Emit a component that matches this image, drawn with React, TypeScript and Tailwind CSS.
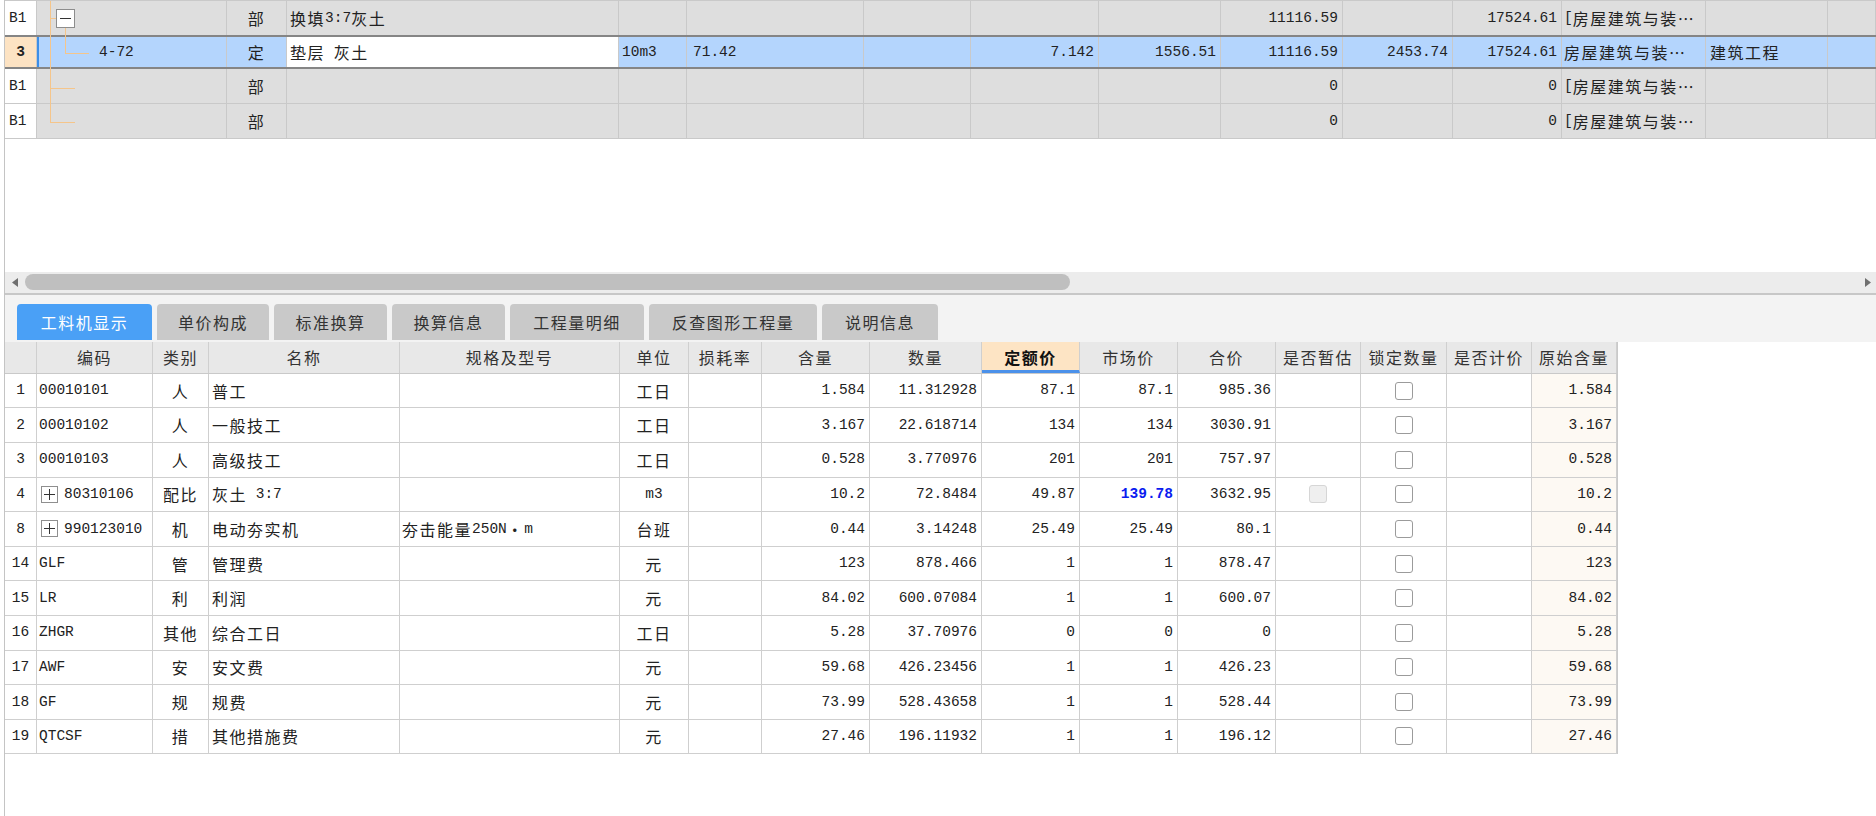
import React from 'react';

const CJK_RE = /([\u00b7\u2026\u22ef\u3000-\u9fff\uff00-\uffef]+)/;

// split mixed text so Chinese and latin get their own font
const Mix = ({ t }: { t: string }) => (
  <>
    {t
      .split(CJK_RE)
      .filter(Boolean)
      .map((p, i) =>
        CJK_RE.test(p) ? (
          <span key={i} className="font-['Noto_Sans_CJK_SC',sans-serif] text-[16px] tracking-[1.5px]">
            {p}
          </span>
        ) : (
          <span key={i} className="font-['Liberation_Mono',monospace] text-[14.5px] whitespace-pre">
            {p}
          </span>
        )
      )}
  </>
);

const TOP_W = [
  'w-[32px]', 'w-[190px]', 'w-[60px]', 'w-[332px]', 'w-[68px]', 'w-[177px]', 'w-[107px]',
  'w-[128px]', 'w-[122px]', 'w-[122px]', 'w-[110px]', 'w-[109px]', 'w-[144px]', 'w-[122px]', 'flex-1',
];
const TOP_AL = ['pl-[4px]', 'pl-[60px]', 'justify-center', 'pl-[3px]', 'pl-[3px]', 'pl-[6px]', 'justify-end pr-[4px]',
  'justify-end pr-[4px]', 'justify-end pr-[4px]', 'justify-end pr-[4px]', 'justify-end pr-[4px]', 'justify-end pr-[4px]',
  'pl-[2px]', 'pl-[4px]', 'pl-[4px]'];

const topRows = [
  ['B1', '', '部', '换填3:7灰土', '', '', '', '', '', '11116.59', '', '17524.61', '[房屋建筑与装⋯', '', ''],
  ['3', '4-72', '定', '垫层 灰土', '10m3', '71.42', '', '7.142', '1556.51', '11116.59', '2453.74', '17524.61', '房屋建筑与装⋯', '建筑工程', ''],
  ['B1', '', '部', '', '', '', '', '', '', '0', '', '0', '[房屋建筑与装⋯', '', ''],
  ['B1', '', '部', '', '', '', '', '', '', '0', '', '0', '[房屋建筑与装⋯', '', ''],
];

const BOT_W = [
  'w-[32px]', 'w-[116px]', 'w-[56px]', 'w-[191px]', 'w-[220px]', 'w-[69px]', 'w-[73px]', 'w-[108px]',
  'w-[112px]', 'w-[98px]', 'w-[98px]', 'w-[98px]', 'w-[85px]', 'w-[86px]', 'w-[85px]', 'w-[85px]',
];
const BOT_AL = ['justify-center', 'pl-[2px]', 'justify-center', 'pl-[3px]', 'pl-[2px]', 'justify-center', 'justify-center',
  'justify-end pr-[4px]', 'justify-end pr-[4px]', 'justify-end pr-[4px]', 'justify-end pr-[4px]', 'justify-end pr-[4px]',
  'justify-center', 'justify-center', 'justify-center', 'justify-end pr-[4px]'];

const headers = ['', '编码', '类别', '名称', '规格及型号', '单位', '损耗率', '含量', '数量', '定额价', '市场价', '合价', '是否暂估', '锁定数量', '是否计价', '原始含量'];

type Item = { no: string; code: string; plus?: boolean; kind: string; name: string; spec?: string; unit: string; qty: string; num: string; base: string; market: string; total: string; est?: boolean };

const items: Item[] = [
  { no: '1', code: '00010101', kind: '人', name: '普工', unit: '工日', qty: '1.584', num: '11.312928', base: '87.1', market: '87.1', total: '985.36' },
  { no: '2', code: '00010102', kind: '人', name: '一般技工', unit: '工日', qty: '3.167', num: '22.618714', base: '134', market: '134', total: '3030.91' },
  { no: '3', code: '00010103', kind: '人', name: '高级技工', unit: '工日', qty: '0.528', num: '3.770976', base: '201', market: '201', total: '757.97' },
  { no: '4', code: '80310106', plus: true, kind: '配比', name: '灰土 3:7', unit: 'm3', qty: '10.2', num: '72.8484', base: '49.87', market: '139.78', total: '3632.95', est: true },
  { no: '8', code: '990123010', plus: true, kind: '机', name: '电动夯实机', spec: '夯击能量250N·m', unit: '台班', qty: '0.44', num: '3.14248', base: '25.49', market: '25.49', total: '80.1' },
  { no: '14', code: 'GLF', kind: '管', name: '管理费', unit: '元', qty: '123', num: '878.466', base: '1', market: '1', total: '878.47' },
  { no: '15', code: 'LR', kind: '利', name: '利润', unit: '元', qty: '84.02', num: '600.07084', base: '1', market: '1', total: '600.07' },
  { no: '16', code: 'ZHGR', kind: '其他', name: '综合工日', unit: '工日', qty: '5.28', num: '37.70976', base: '0', market: '0', total: '0' },
  { no: '17', code: 'AWF', kind: '安', name: '安文费', unit: '元', qty: '59.68', num: '426.23456', base: '1', market: '1', total: '426.23' },
  { no: '18', code: 'GF', kind: '规', name: '规费', unit: '元', qty: '73.99', num: '528.43658', base: '1', market: '1', total: '528.44' },
  { no: '19', code: 'QTCSF', kind: '措', name: '其他措施费', unit: '元', qty: '27.46', num: '196.11932', base: '1', market: '1', total: '196.12' },
];

const tabs = ['工料机显示', '单价构成', '标准换算', '换算信息', '工程量明细', '反查图形工程量', '说明信息'];
const TAB_W = ['w-[135px]', 'w-[112px]', 'w-[113px]', 'w-[113px]', 'w-[134px]', 'w-[168px]', 'w-[116px]'];

const TreeLines = () => (
  <svg className="absolute left-[32px] top-0" width="190" height="140" viewBox="0 0 190 140">
    <g stroke="#f5c58a" strokeWidth="1" fill="none" shapeRendering="crispEdges">
      <line x1="13.5" y1="0" x2="13.5" y2="122" />
      <line x1="13" y1="17.5" x2="19" y2="17.5" />
      <line x1="28.5" y1="27" x2="28.5" y2="52.5" />
      <line x1="28" y1="52.5" x2="52" y2="52.5" />
      <line x1="13" y1="87.5" x2="38" y2="87.5" />
      <line x1="13" y1="121.5" x2="38" y2="121.5" />
    </g>
    <rect x="19.5" y="8.5" width="18" height="18" fill="#fff" stroke="#8d8d8d" shapeRendering="crispEdges" />
    <line x1="23" y1="17.5" x2="34" y2="17.5" stroke="#333" shapeRendering="crispEdges" />
  </svg>
);

const Check = ({ disabled }: { disabled?: boolean }) => (
  <div
    className={
      disabled
        ? 'w-[18px] h-[18px] rounded-[3px] border border-[#d6d6d6] bg-[#efefef]'
        : 'w-[18px] h-[18px] rounded-[3px] border border-[#9b9b9b] bg-white'
    }
  />
);

const PlusBox = () => (
  <span className="inline-flex items-center justify-center w-[17px] h-[17px] border border-[#8f8f8f] bg-white mr-[6px] ml-[2px] text-[#333]">
    <svg width="11" height="11" viewBox="0 0 11 11">
      <path d="M0 5.5H11M5.5 0V11" stroke="#333" strokeWidth="1" shapeRendering="crispEdges" />
    </svg>
  </span>
);

export default function App() {
  return (
    <div className="w-[1876px] h-[816px] bg-white overflow-hidden text-[#222]">
      <div className="ml-[4px] h-full border-l border-[#c4c4c4] flex flex-col">
        {/* upper grid */}
        <div className="relative border-t border-[#c9c9c9] shrink-0">
          {topRows.map((r, ri) => {
            const sel = ri === 1;
            return (
              <div
                key={ri}
                className={
                  sel
                    ? 'flex h-[34.7px] bg-[#b4d5fd] border-y-2 border-[#858585] -mt-px'
                    : 'flex h-[34.7px] bg-[#dedede] border-b border-[#c9c9c9]'
                }
              >
                {r.map((c, ci) => {
                  let extra = '';
                  if (ci === 0) extra = sel ? 'bg-[#fde3c3] justify-center font-bold' : 'bg-white';
                  if (sel && ci === 1) extra = 'border-l-2 border-l-[#3c8ee8]';
                  if (sel && ci === 3) extra = 'bg-white';
                  return (
                    <div
                      key={ci}
                      className={`${TOP_W[ci]} ${sel && ci === 0 ? '' : TOP_AL[ci]} ${extra} shrink-0 flex items-center border-r border-[#c9c9c9] overflow-hidden whitespace-nowrap leading-none`}
                    >
                      {c && <Mix t={c} />}
                    </div>
                  );
                })}
              </div>
            );
          })}
          <TreeLines />
        </div>

        <div className="h-[133px] shrink-0" />

        {/* horizontal scrollbar */}
        <div className="h-[21px] shrink-0 bg-[#ececec] flex items-center relative">
          <svg className="ml-[7px]" width="6" height="9" viewBox="0 0 6 9">
            <path d="M6 0V9L0 4.5Z" fill="#6f6f6f" />
          </svg>
          <div className="ml-[7px] w-[1045px] h-[16px] rounded-full bg-[#bfbfbf]" />
          <div className="flex-1" />
          <svg className="mr-[5px]" width="6" height="9" viewBox="0 0 6 9">
            <path d="M0 0V9L6 4.5Z" fill="#6f6f6f" />
          </svg>
        </div>
        <div className="h-[2px] shrink-0 bg-[#c7c7c7]" />

        {/* tabs */}
        <div className="h-[47px] shrink-0 bg-[#f3f3f3] flex items-end gap-[5px] pl-[12px] pb-[2px]">
          {tabs.map((t, i) => (
            <div
              key={t}
              className={`${TAB_W[i]} h-[36px] rounded-t-[4px] flex items-center justify-center font-['Noto_Sans_CJK_SC',sans-serif] text-[16px] tracking-[1.5px] ${
                i === 0 ? 'bg-[#4aa0f6] text-white' : 'bg-[#c9c9c9] text-[#333]'
              }`}
            >
              {t}
            </div>
          ))}
        </div>

        {/* lower table */}
        <div className="w-[1613px] border-r border-[#c9c9c9] shrink-0">
          <div className="flex h-[32px] bg-[#e8e8e8] border-b border-[#c9c9c9]">
            {headers.map((h, i) => (
              <div
                key={i}
                className={`${BOT_W[i]} shrink-0 flex items-center justify-center border-r border-[#cfcfcf] font-['Noto_Sans_CJK_SC',sans-serif] text-[16px] tracking-[1.5px] leading-none ${
                  i === 9 ? 'bg-[#fde4c4] font-bold text-[#111] border-b-[3px] border-b-[#4b91ea] pt-[3px]' : 'text-[#333]'
                }`}
              >
                {h}
              </div>
            ))}
          </div>
          {items.map((it) => {
            const cells: React.ReactNode[] = [
              <Mix t={it.no} />,
              <>
                {it.plus && <PlusBox />}
                <Mix t={it.code} />
              </>,
              <Mix t={it.kind} />,
              <Mix t={it.name} />,
              it.spec ? <Mix t={it.spec} /> : null,
              <Mix t={it.unit} />,
              null,
              <Mix t={it.qty} />,
              <Mix t={it.num} />,
              <Mix t={it.base} />,
              it.est ? (
                <span className="font-['Liberation_Mono',monospace] text-[14.5px] font-bold text-[#0a1cf0]">{it.market}</span>
              ) : (
                <Mix t={it.market} />
              ),
              <Mix t={it.total} />,
              it.est ? <Check disabled /> : null,
              <Check />,
              null,
              <Mix t={it.qty} />,
            ];
            return (
              <div key={it.no} className="flex h-[34.6px] bg-white border-b border-[#cfcfcf]">
                {cells.map((c, i) => (
                  <div
                    key={i}
                    className={`${BOT_W[i]} ${BOT_AL[i]} ${i === 15 ? 'bg-[#fdf9f3]' : ''} shrink-0 flex items-center border-r border-[#cfcfcf] whitespace-nowrap overflow-hidden leading-none`}
                  >
                    {c}
                  </div>
                ))}
              </div>
            );
          })}
        </div>
      </div>
    </div>
  );
}
